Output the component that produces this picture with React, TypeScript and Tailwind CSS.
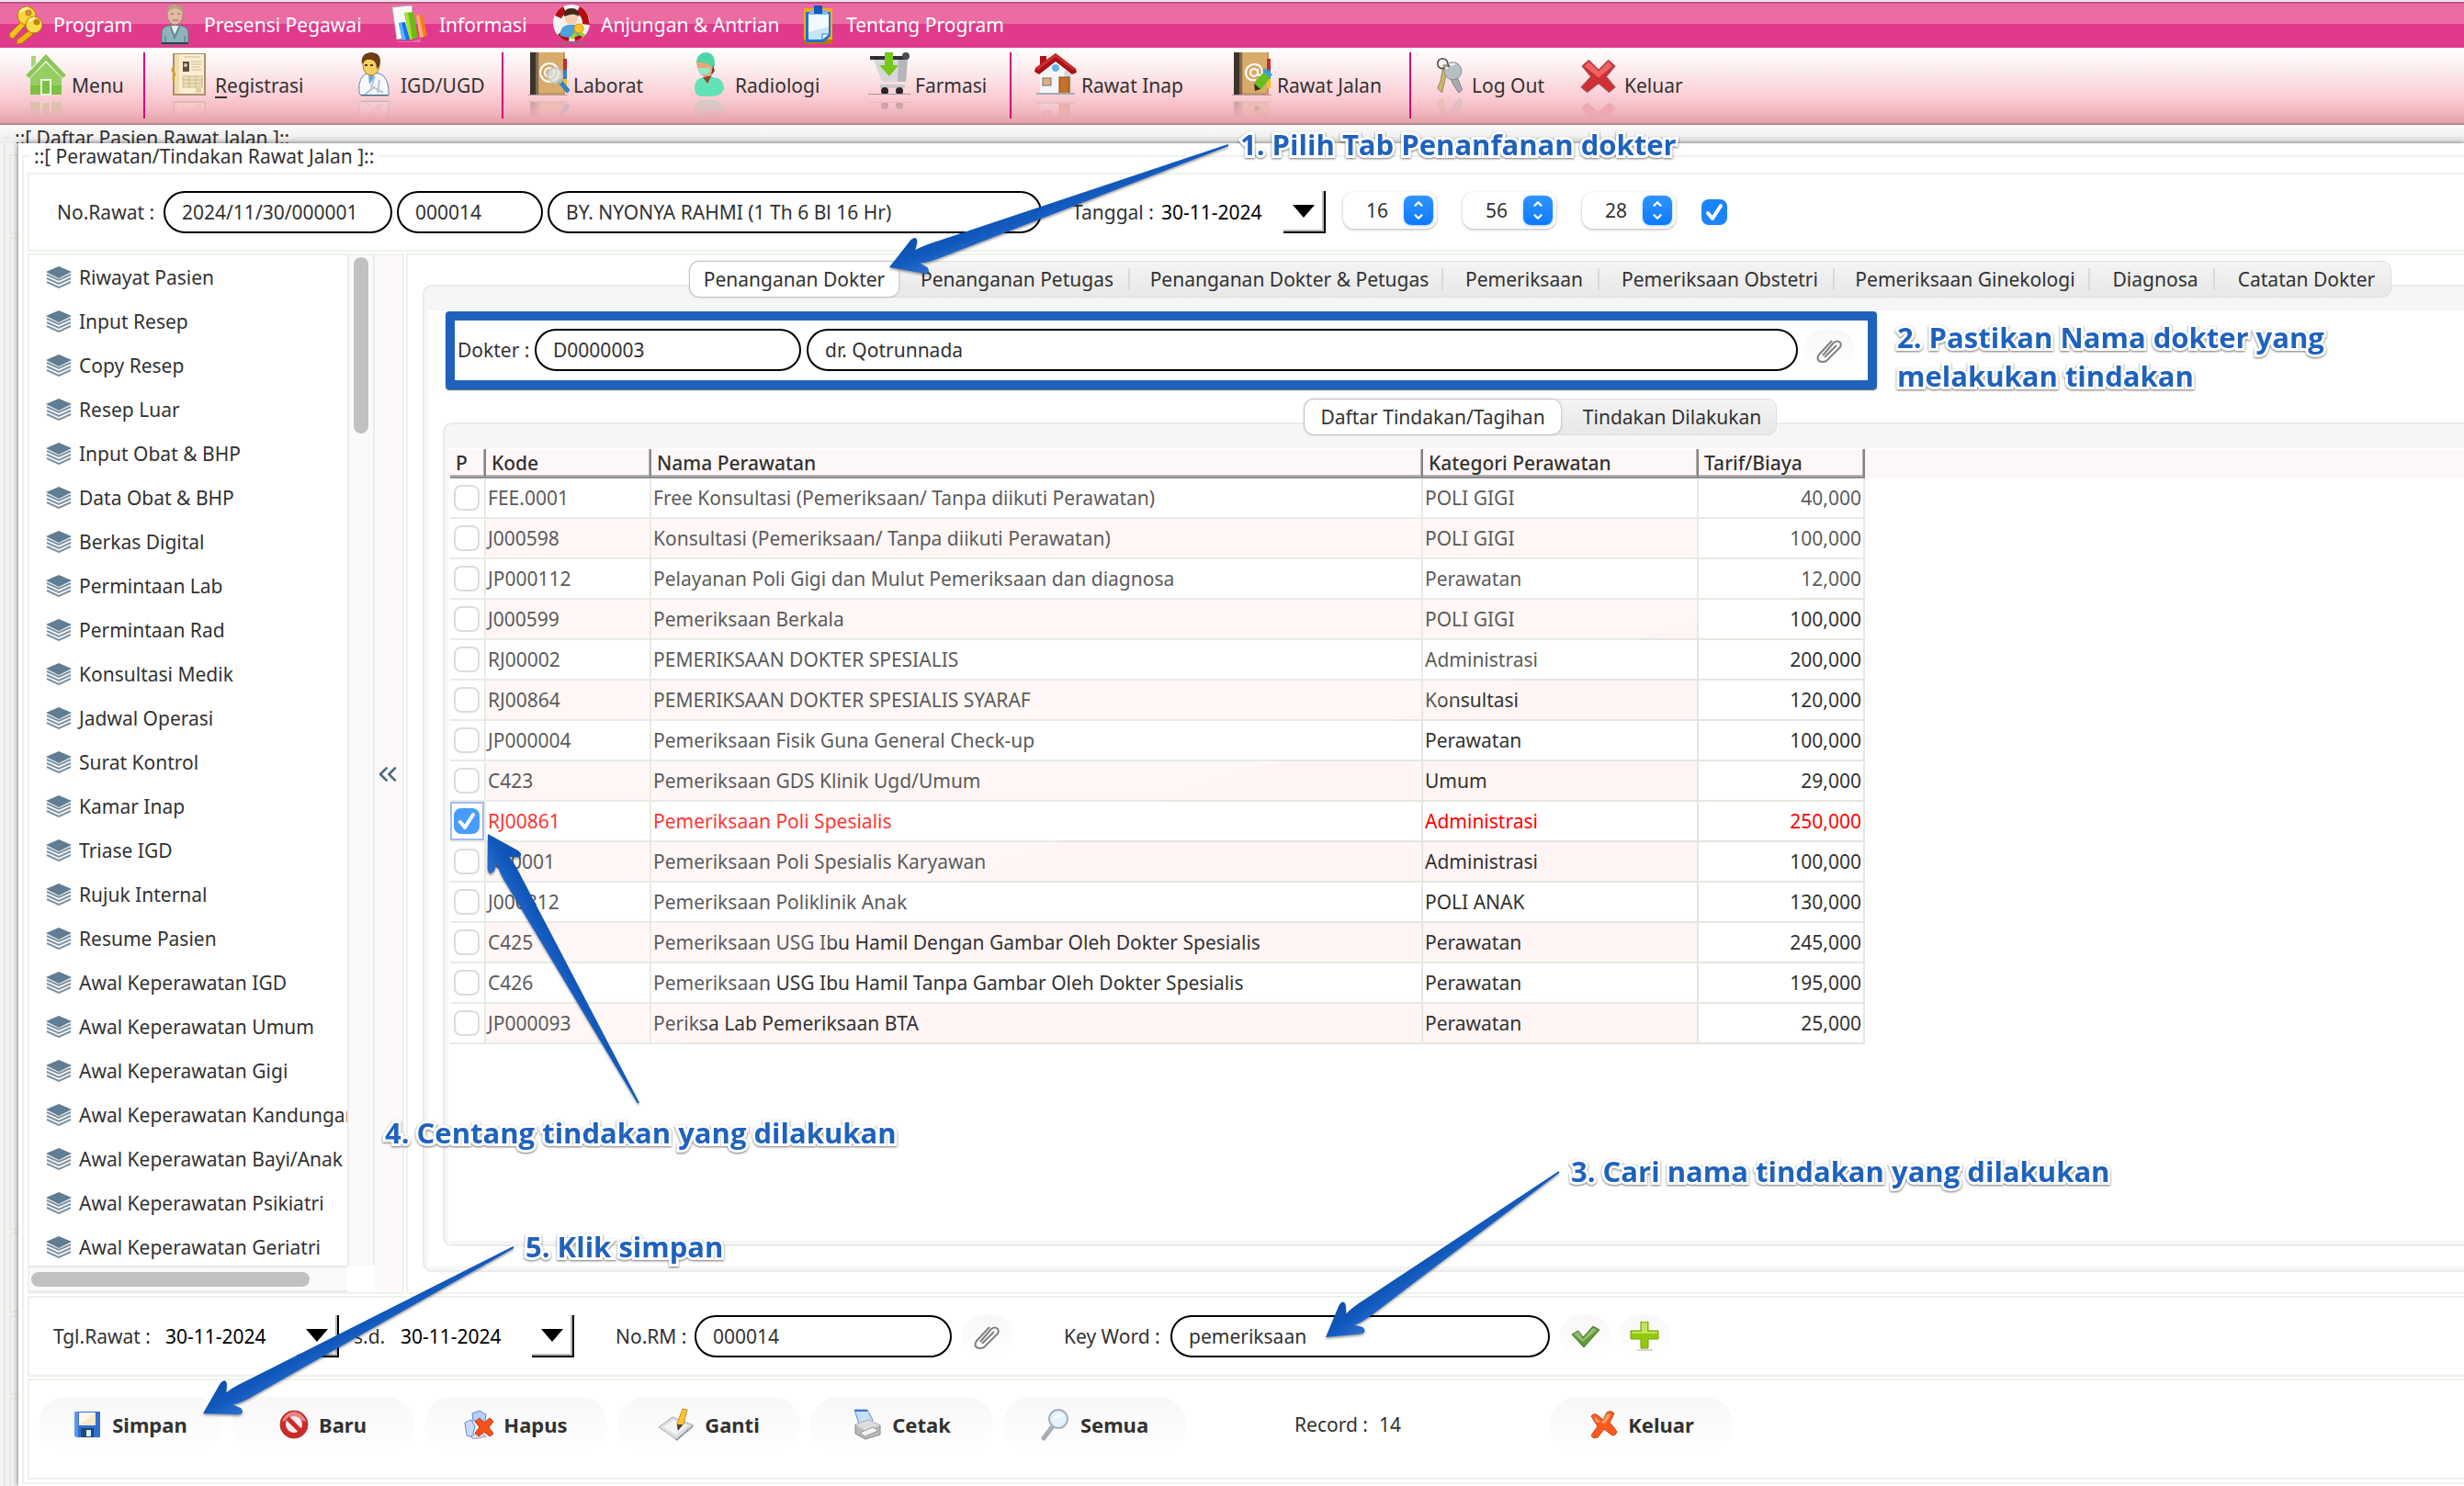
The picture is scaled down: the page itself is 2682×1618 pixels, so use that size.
import React, { useState, ReactNode } from 'react';
import { ChevronDown, ChevronUp, ChevronsLeft } from 'lucide-react';

interface Tindakan {
    kode: string;
    nama: string;
    kategori: string;
    tarif: string;
}

const daftarTindakan: Tindakan[] = [
    { kode: 'FEE.0001', nama: 'Free Konsultasi (Pemeriksaan/ Tanpa diikuti Perawatan)', kategori: 'POLI GIGI', tarif: '40,000' },
    { kode: 'J000598', nama: 'Konsultasi (Pemeriksaan/ Tanpa diikuti Perawatan)', kategori: 'POLI GIGI', tarif: '100,000' },
    { kode: 'JP000112', nama: 'Pelayanan Poli Gigi dan Mulut Pemeriksaan dan diagnosa', kategori: 'Perawatan', tarif: '12,000' },
    { kode: 'J000599', nama: 'Pemeriksaan Berkala', kategori: 'POLI GIGI', tarif: '100,000' },
    { kode: 'RJ00002', nama: 'PEMERIKSAAN DOKTER SPESIALIS', kategori: 'Administrasi', tarif: '200,000' },
    { kode: 'RJ00864', nama: 'PEMERIKSAAN DOKTER SPESIALIS SYARAF', kategori: 'Konsultasi', tarif: '120,000' },
    { kode: 'JP000004', nama: 'Pemeriksaan Fisik Guna General Check-up', kategori: 'Perawatan', tarif: '100,000' },
    { kode: 'C423', nama: 'Pemeriksaan GDS Klinik Ugd/Umum', kategori: 'Umum', tarif: '29,000' },
    { kode: 'RJ00861', nama: 'Pemeriksaan Poli Spesialis', kategori: 'Administrasi', tarif: '250,000' },
    { kode: 'K00001', nama: 'Pemeriksaan Poli Spesialis Karyawan', kategori: 'Administrasi', tarif: '100,000' },
    { kode: 'J000812', nama: 'Pemeriksaan Poliklinik Anak', kategori: 'POLI ANAK', tarif: '130,000' },
    { kode: 'C425', nama: 'Pemeriksaan USG Ibu Hamil Dengan Gambar Oleh Dokter Spesialis', kategori: 'Perawatan', tarif: '245,000' },
    { kode: 'C426', nama: 'Pemeriksaan USG Ibu Hamil Tanpa Gambar Oleh Dokter Spesialis', kategori: 'Perawatan', tarif: '195,000' },
    { kode: 'JP000093', nama: 'Periksa Lab Pemeriksaan BTA', kategori: 'Perawatan', tarif: '25,000' },
];

const menuSamping = [
    'Riwayat Pasien', 'Input Resep', 'Copy Resep', 'Resep Luar', 'Input Obat & BHP', 'Data Obat & BHP',
    'Berkas Digital', 'Permintaan Lab', 'Permintaan Rad', 'Konsultasi Medik', 'Jadwal Operasi', 'Surat Kontrol',
    'Kamar Inap', 'Triase IGD', 'Rujuk Internal', 'Resume Pasien', 'Awal Keperawatan IGD', 'Awal Keperawatan Umum',
    'Awal Keperawatan Gigi', 'Awal Keperawatan Kandungan', 'Awal Keperawatan Bayi/Anak', 'Awal Keperawatan Psikiatri',
    'Awal Keperawatan Geriatri',
];

const tabUtama = [
    { label: 'Penanganan Dokter', width: 'w-[227px]' },
    { label: 'Penanganan Petugas', width: 'w-[252px]' },
    { label: 'Penanganan Dokter & Petugas', width: 'w-[341px]' },
    { label: 'Pemeriksaan', width: 'w-[170px]' },
    { label: 'Pemeriksaan Obstetri', width: 'w-[256px]' },
    { label: 'Pemeriksaan Ginekologi', width: 'w-[278px]' },
    { label: 'Diagnosa', width: 'w-[136px]' },
    { label: 'Catatan Dokter', width: 'w-[191px]' },
];

const tabTindakan = [
    { label: 'Daftar Tindakan/Tagihan', width: 'w-[279px]' },
    { label: 'Tindakan Dilakukan', width: 'w-[234px]' },
];

/* ---------- menu bar icons (40 x 44) ---------- */

const KeysIcon = () => (
    <svg viewBox="0 0 40 44" className="w-10 h-11">
        <g stroke="#b97a00" strokeWidth="1">
            <path d="M18 18 L22 22 L8 37 L5 36 L4 32 Z" fill="#f5c21a" />
            <circle cx="23" cy="12" r="10" fill="#fbd53a" />
            <circle cx="25" cy="9" r="3" fill="#d98b56" />
            <path d="M26 28 L30 32 L18 42 L12 43 L13 38 Z" fill="#f0b512" />
            <circle cx="31" cy="22" r="9" fill="#fbdc4c" />
            <circle cx="34" cy="19" r="3" fill="#c98412" />
        </g>
        <path d="M16 8 Q20 4 25 4 M26 18 Q28 15 32 15" stroke="#fff3a8" strokeWidth="3" fill="none" />
    </svg>
);

const PersonIcon = () => (
    <svg viewBox="0 0 40 44" className="w-10 h-11">
        <path d="M6 43 V31 Q6 24 14 23 H27 Q35 24 35 31 V43 Z" fill="#8fb3b8" stroke="#5a7c82" />
        <path d="M14 23 L20 32 L27 23 Z" fill="#e9f1f2" />
        <path d="M15 22 L20 36 L26 22" fill="none" stroke="#5f8b92" strokeWidth="2" />
        <path d="M10 43 V34 M31 43 V34" stroke="#4d747b" />
        <ellipse cx="20.500" cy="11" rx="8.500" ry="11" fill="#e3b9a2" stroke="#9b8a6c" />
        <path d="M12 11 Q11 0 20 0 Q30 0 29 11 Q27 4 20 4 Q14 4 12 11" fill="#b5a57c" />
        <path d="M16 10 H19 M23 10 H26 M18 17 H24" stroke="#8a5e4e" strokeWidth="1" />
        <rect x="6" y="41" width="29" height="2" fill="#1d4a56" />
    </svg>
);

const ChartIcon = () => (
    <svg viewBox="0 0 40 44" className="w-10 h-11">
        <path d="M1 3 L22 1 L26 34 L6 38 Z" fill="#fafafa" stroke="#bdbdbd" />
        <path d="M27 12 L34 11 L39 34 L31 36 Z" fill="#f57b1f" />
        <path d="M27 12 L30 11 L35 35 L31 36 Z" fill="#ffb46b" />
        <path d="M14 9 L24 8 L29 36 L20 38 Z" fill="#6cba14" />
        <path d="M14 9 L18 8 L23 38 L20 38 Z" fill="#a6df3a" />
        <path d="M8 20 L15 19 L20 38 L12 39 Z" fill="#1472e6" />
        <path d="M8 20 L11 20 L16 38 L12 39 Z" fill="#5ab4ff" />
        <path d="M6 40 L22 40 L32 37 V41 H8 Z" fill="#ffffff" opacity=".25" />
    </svg>
);

const LifeRingIcon = () => (
    <svg viewBox="0 0 40 44" className="w-10 h-11">
        <ellipse cx="20" cy="42" rx="19" ry="1" fill="#8d6b80" />
        <circle cx="20" cy="20" r="20" fill="#f4f4f4" />
        <g fill="#b40e12">
            <path d="M20 20 L11 2 Q5 5 2 12 Z" />
            <path d="M20 20 L29 2 Q35 5 38 12 L40 22 Z" />
            <path d="M20 20 L5 33 Q10 39 17 40 Z" />
            <path d="M20 20 L34 34 Q30 38 24 40 Z" />
        </g>
        <circle cx="20" cy="20" r="12" fill="#f5f0ee" />
        <path d="M8 34 Q7 24 16 22 H24 Q31 24 31 33 Q20 38 8 34" fill="#4aa3d9" />
        <circle cx="20" cy="15" r="7" fill="#f5cdb0" />
        <path d="M12 13 Q11 4 20 4 Q29 4 28 13 Q23 8 12 13" fill="#43291f" />
        <circle cx="28" cy="26" r="5" fill="#f9c623" stroke="#d79400" />
        <path d="M25 31 L20 37 M29 31 L34 34" stroke="#a5cf2a" strokeWidth="4" />
    </svg>
);

const ClipboardIcon = () => (
    <svg viewBox="0 0 40 44" className="w-10 h-11">
        <rect x="6" y="4" width="31" height="39" fill="#f1ae08" />
        <rect x="6" y="38" width="31" height="5" fill="#b87a05" />
        <path d="M8 8 H35 V34 L28 41 H8 Z" fill="#1d74d4" />
        <path d="M11 10 H33 V32 L26 38 H11 Z" fill="#f3faff" />
        <path d="M11 30 L33 24 V32 L26 38 H11 Z" fill="#c4e6ff" />
        <path d="M26 38 V32 H33" fill="#fff" stroke="#1d74d4" />
        <rect x="12" y="6" width="20" height="5" fill="#7db8f5" />
        <rect x="17" y="1" width="9" height="9" fill="#0f57c2" />
    </svg>
);

/* ---------- toolbar icons, drawn with their reflection ---------- */

function ToolIcon({ children, width = 'w-12' }: { children: ReactNode; width?: string }) {
    return (
        <svg
            viewBox="0 0 48 72"
            className={`${width} h-[72px] shrink-0 [mask-image:linear-gradient(to_bottom,black_68%,transparent_100%)]`}
        >
            <g>{children}</g>
            <g opacity=".3" transform="translate(0 100) scale(1 -1)">{children}</g>
        </svg>
    );
}

const homeIcon = (
    <g>
        <path d="M8 4 H13 V12 L8 17 Z" fill="#a9d579" />
        <path d="M24 2 L46 25 L42 28 L24 9 L6 28 L2 25 Z" fill="#8ac85a" />
        <path d="M7 28 L24 11 L41 28 V46 H7 Z" fill="#95cf64" />
        <path d="M7 36 H41 V46 H7 Z" fill="#7cc142" />
        <path d="M19 46 V30 H29 V46 Z" fill="#7cc142" stroke="#eef7e2" strokeWidth="2" />
    </g>
);

const recordIcon = (
    <g>
        <rect x="6" y="1" width="36" height="46" fill="#a98f6c" />
        <rect x="8" y="2" width="32" height="43" fill="#fbeed0" />
        <rect x="8" y="2" width="5" height="43" fill="#f1dcae" />
        <path d="M18 5 H36 M26 10 H38 M26 13 H38 M26 16 H36 M26 19 H38" stroke="#cdbb93" strokeWidth="1" />
        <rect x="17" y="10" width="7" height="11" fill="#5b5142" />
        <circle cx="20" cy="14" r="2" fill="#d7c6a0" />
        <path d="M17 26 H38 V38 H17 Z M17 30 H38 M17 34 H38 M24 26 V38 M31 26 V38" fill="#efe0ba" stroke="#c9b88f" />
        <path d="M8 16 Q4 17 6 21 Q10 23 7 27 Q5 30 8 31" fill="none" stroke="#d9a62c" strokeWidth="2" />
        <rect x="31" y="39" width="6" height="5" fill="#e2d0a2" />
    </g>
);

const doctorIcon = (
    <g>
        <path d="M7 44 Q5 26 17 22 L29 23 Q40 27 39 47 H9 Z" fill="#f7f9fc" stroke="#5a86ad" />
        <path d="M17 23 L18 35 L24 26 Z" fill="#6aa4da" />
        <path d="M24 26 L20 38 M29 30 L27 44 M13 46 L23 38 L33 44" fill="none" stroke="#b4c2d1" strokeWidth="2" />
        <ellipse cx="20" cy="14" rx="9" ry="11" fill="#f6cf62" stroke="#a97b24" />
        <path d="M10 13 Q8 1 20 0 Q33 1 29 15 L26 18 Q26 9 20 8 Q13 7 10 13" fill="#6b3c16" />
        <path d="M13 14 H16 M19 14 H22" stroke="#5a3412" strokeWidth="2" />
        <rect x="9" y="46" width="29" height="1" fill="#2c6580" />
    </g>
);

const bookBase = (
    <g>
        <rect x="5" y="0" width="38" height="46" fill="#c6975a" />
        <rect x="15" y="0" width="26" height="44" fill="#d8ab6c" />
        <rect x="5" y="0" width="9" height="46" fill="#3c342b" />
        <rect x="11" y="0" width="3" height="46" fill="#7d6a53" />
        <rect x="41" y="7" width="4" height="12" fill="#c32b2b" />
        <rect x="41" y="19" width="4" height="10" fill="#2e7fd0" />
        <rect x="41" y="29" width="4" height="10" fill="#f4bf1c" />
        <rect x="3" y="46" width="43" height="1" fill="#b59aa0" />
    </g>
);

const labIcon = (
    <g>
        {bookBase}
        <circle cx="26" cy="22" r="10" fill="none" stroke="#fff" strokeWidth="2" />
        <circle cx="26" cy="22" r="5" fill="none" stroke="#fff" strokeWidth="2" />
        <circle cx="32" cy="25" r="8" fill="#dfe5e4" fillOpacity=".75" stroke="#c5c9cb" strokeWidth="2" />
        <path d="M37 31 L47 43" stroke="#2b84c4" strokeWidth="5" />
        <path d="M36 30 L39 33" stroke="#bbb" strokeWidth="4" />
    </g>
);

const surgeonIcon = (
    <g>
        <path d="M8 38 Q8 28 19 27 H28 Q40 28 40 40 Q38 47 27 48 H14 Q8 46 8 38" fill="#63e2b8" />
        <path d="M17 27 L22 34 L27 25 Z" fill="#8a4b2c" />
        <path d="M10 10 H29 V22 Q24 27 18 26 Q11 24 10 10" fill="#e9a579" />
        <path d="M12 17 H24 Q27 21 22 24 H15 Q12 22 12 17" fill="#8cecca" />
        <path d="M10 11 Q11 0 21 0 Q31 1 30 15 L27 16 Q22 10 10 11" fill="#4fd6a8" />
        <path d="M28 14 L26 25 L30 20 Z" fill="#7a3d22" />
    </g>
);

const cartIcon = (
    <g>
        <path d="M6 6 H44 L42 32 H16 Z" fill="#d7d7d9" />
        <path d="M34 6 H44 L42 32 H33 Z" fill="#b6b6ba" />
        <rect x="3" y="4" width="38" height="4" fill="#2f2f33" />
        <circle cx="42" cy="4" r="4" fill="#4a4a50" />
        <rect x="14" y="35" width="27" height="4" fill="#c9c9cc" />
        <circle cx="19" cy="42" r="4" fill="#2b2528" />
        <circle cx="35" cy="42" r="4" fill="#2b2528" />
        <rect x="1" y="45" width="46" height="1" fill="#a8979b" />
        <path d="M19 0 H28 V14 H34 L24 26 L13 14 H19 Z" fill="#76c81b" />
    </g>
);

const houseIcon = (
    <g>
        <rect x="7" y="4" width="7" height="12" fill="#b01318" />
        <path d="M7 20 L24 6 L41 20 V45 H7 Z" fill="#f5f5f7" />
        <path d="M34 20 H41 V45 H30 Z" fill="#d5d6da" />
        <path d="M24 1 L46 18 L47 22 L42 24 L24 10 L6 24 L1 21 L2 17 Z" fill="#a51218" />
        <path d="M24 1 L46 18 L43 19 L24 5 L5 19 L2 17 Z" fill="#cf2d30" />
        <circle cx="24" cy="17" r="4" fill="#6ab1e0" />
        <rect x="10" y="28" width="9" height="8" fill="#d8b184" stroke="#7a6a58" />
        <rect x="28" y="27" width="11" height="18" fill="#c4712c" stroke="#8c4714" />
        <path d="M3 45 H45" stroke="#a3adb5" strokeWidth="2" />
    </g>
);

const addressIcon = (
    <g>
        {bookBase}
        <circle cx="27" cy="22" r="4" fill="none" stroke="#fff" strokeWidth="2" />
        <path d="M31 18 V24 Q36 27 36 20 Q34 12 26 13 Q18 15 18 23 Q20 32 29 30" fill="none" stroke="#fff" strokeWidth="2" />
        <path d="M28 32 L38 21 L45 27 L35 40 L28 39 Z" fill="#68bf1c" />
        <path d="M38 17 L47 24 L44 28 L36 20 Z" fill="#38a1d8" />
        <path d="M27 34 L34 40 L28 42 Z" fill="#2d2b28" />
    </g>
);

const logoutIcon = (
    <g>
        <path d="M14 8 L20 8 L16 30 L12 46 L6 40 L10 30 Z" fill="#cdb56d" stroke="#85734a" />
        <circle cx="13" cy="6" r="7" fill="none" stroke="#4b4b4f" strokeWidth="2" />
        <path d="M22 22 H32 L40 42 L35 46 L27 34 Z" fill="#a6abb0" stroke="#6d7278" />
        <circle cx="27" cy="16" r="12" fill="#b9bec3" stroke="#767b81" />
        <path d="M18 13 Q22 6 30 7" fill="none" stroke="#f0f2f4" strokeWidth="3" />
        <circle cx="21" cy="9" r="2" fill="#5b5f64" />
    </g>
);

const crossIcon = (
    <g>
        <path
            d="M12 7 L23 18 L34 7 L42 14 L32 26 L42 38 L35 44 L23 34 L10 44 L3 38 L14 26 L4 14 Z"
            fill="#cf3036"
            stroke="#8c6264"
        />
        <path d="M12 9 L23 20 L34 9 L39 14 L23 27 L7 14 Z" fill="#ee6264" />
    </g>
);

/* ---------- small icons ---------- */

const LayersIcon = () => (
    <svg viewBox="0 0 28 24" className="w-7 h-6 shrink-0">
        <path d="M14 0 L28 6 L14 13 L0 6 Z" fill="#5f7d93" />
        <g fill="none" stroke="#7d93a4" strokeWidth="2">
            <path d="M1 9 L14 15 L27 9" />
            <path d="M1 13 L14 19 L27 13" />
            <path d="M1 17 L14 23 L27 17" />
        </g>
    </svg>
);

const SaveIcon = () => (
    <svg viewBox="0 0 32 32" className="w-8 h-8">
        <path d="M2 2 H30 V30 H4 L2 28 Z" fill="#2f6fd3" />
        <path d="M2 2 H6 V30 H4 L2 28 Z" fill="#5e97ea" />
        <rect x="7" y="3" width="18" height="14" fill="#fdf7ee" />
        <path d="M7 17 L25 3 V17 Z" fill="#fbe6c8" />
        <rect x="9" y="20" width="14" height="10" fill="#1c4c6e" />
        <rect x="15" y="22" width="5" height="7" fill="#d8eef5" />
    </svg>
);

const BanIcon = () => (
    <svg viewBox="0 0 32 32" className="w-8 h-8">
        <circle cx="16" cy="16" r="15" fill="#cf2a2a" stroke="#a33" />
        <path d="M3 13 Q6 3 16 2 Q26 3 29 13 Q16 8 3 13" fill="#e88584" />
        <circle cx="16" cy="16" r="9" fill="#f8eded" />
        <path d="M9 9 L23 23" stroke="#cf2a2a" strokeWidth="5" />
    </svg>
);

const RecycleIcon = () => (
    <svg viewBox="0 0 32 32" className="w-8 h-8">
        <path d="M9 4 L17 1 L24 5 L23 12 L10 12 Z" fill="#b4d0fa" stroke="#5f86da" />
        <path d="M1 14 L8 11 L12 18 L9 30 L3 28 Z" fill="#c9dcfb" stroke="#5f86da" />
        <path d="M8 28 L18 24 L24 29 L10 32 Z" fill="#dfe2ea" stroke="#8e98b4" />
        <path d="M12 13 L17 9 L22 14 L28 9 L32 13 L27 19 L32 26 L28 29 L22 24 L16 29 L12 25 L17 19 Z" fill="#f4511c" stroke="#c53a10" />
    </svg>
);

const EditIcon = () => (
    <svg viewBox="0 0 40 36" className="w-10 h-9">
        <path d="M1 21 L16 10 L39 19 L21 35 Z" fill="#dcdee0" stroke="#a4a9ae" />
        <path d="M6 21 L17 13 L33 19 L20 29 Z" fill="#f4f5f6" />
        <path d="M20 35 L38 20" stroke="#7d8790" strokeWidth="2" strokeDasharray="2 1" />
        <path d="M22 24 L21 17 L27 1 L32 2 L28 18 Z" fill="#f8c63a" stroke="#cc8a1d" />
        <path d="M21 18 L27 18 L22 25 Z" fill="#444" />
    </svg>
);

const PrintIcon = () => (
    <svg viewBox="0 0 32 34" className="w-8 h-9">
        <path d="M2 1 H16 L22 12 L18 18 L7 16 Z" fill="#c5dff9" stroke="#5e91d6" />
        <path d="M2 1 H16 V3 H3 Z" fill="#3e79cc" />
        <path d="M3 17 L18 12 L30 18 V28 L14 33 L3 27 Z" fill="#b9b9bb" stroke="#88888c" />
        <path d="M3 17 L18 12 L30 18 L14 24 Z" fill="#dcdcde" />
        <path d="M8 26 L22 20 L28 24 L13 30 Z" fill="#f4f4f5" stroke="#9b9b9f" />
    </svg>
);

const SearchIcon = () => (
    <svg viewBox="0 0 32 34" className="w-8 h-9">
        <path d="M12 20 L3 32" stroke="#a8adb3" strokeWidth="5" strokeLinecap="round" />
        <circle cx="19" cy="11" r="10" fill="#e2f2fe" stroke="#a9b0b8" strokeWidth="2" />
        <path d="M12 12 Q19 2 26 8 Q21 8 12 12" fill="#ffffff" />
    </svg>
);

const CloseIcon = () => (
    <svg viewBox="0 0 32 32" className="w-8 h-8">
        <path
            d="M3 7 Q6 3 10 6 L16 11 L20 3 Q24 0 28 4 L23 14 Q28 19 31 24 Q30 28 26 28 L17 21 L10 30 Q5 32 3 28 L10 18 Z"
            fill="#fb5a1e"
            stroke="#c9400f"
        />
        <path d="M6 7 L14 14 L21 4 L25 5 L18 15 L8 13 Z" fill="#ff9d71" />
    </svg>
);

const ClipIcon = () => (
    <svg viewBox="0 0 28 28" className="w-7 h-7">
        <path
            d="M7 20 L19 6 Q23 3 26 6 Q28 9 25 12 L11 26 Q7 28 3 26 Q0 23 3 19 L17 4 M9 22 L22 9"
            fill="none"
            stroke="#808080"
            strokeWidth="2"
        />
    </svg>
);

const CheckIcon = () => (
    <svg viewBox="0 0 32 26" className="w-8 h-7">
        <path d="M1 11 L8 7 L13 14 L24 2 L31 6 L14 25 Z" fill="#5f9a3a" stroke="#49792b" />
        <path d="M3 11 L8 8 L13 16 L24 4 L28 6 L13 19 Z" fill="#94bd76" />
    </svg>
);

const PlusIcon = () => (
    <svg viewBox="0 0 32 32" className="w-8 h-8">
        <rect x="8" y="30" width="17" height="2" fill="#d5d5d5" />
        <path d="M12 0 H20 V10 H31 V19 H20 V29 H12 V19 H1 V10 H12 Z" fill="#93c90e" stroke="#72a300" />
        <path d="M13 1 H19 V11 H30 V13 H2 V11 H13 Z" fill="#c1e55c" />
    </svg>
);

const menuUtama = [
    { label: 'Program', icon: <KeysIcon />, width: 'w-[164px]' },
    { label: 'Presensi Pegawai', icon: <PersonIcon />, width: 'w-[256px]' },
    { label: 'Informasi', icon: <ChartIcon />, width: 'w-[176px]' },
    { label: 'Anjungan & Antrian', icon: <LifeRingIcon />, width: 'w-[267px]' },
    { label: 'Tentang Program', icon: <ClipboardIcon />, width: 'w-[240px]' },
];

const toolbar = [
    { label: 'Menu', icon: homeIcon, width: 'w-[154px]', sep: true },
    { label: 'Registrasi', icon: recordIcon, width: 'w-[202px]', mnemonic: true },
    { label: 'IGD/UGD', icon: doctorIcon, width: 'w-[186px]', sep: true },
    { label: 'Laborat', icon: labIcon, width: 'w-[176px]' },
    { label: 'Radiologi', icon: surgeonIcon, width: 'w-[196px]' },
    { label: 'Farmasi', icon: cartIcon, width: 'w-[179px]', sep: true },
    { label: 'Rawat Inap', icon: houseIcon, width: 'w-[213px]' },
    { label: 'Rawat Jalan', icon: addressIcon, width: 'w-[220px]', sep: true },
    { label: 'Log Out', icon: logoutIcon, width: 'w-[158px]', iconWidth: 'w-[38px]' },
    { label: 'Keluar', icon: crossIcon, width: 'w-[160px]', iconWidth: 'w-[46px]' },
];

function TextField({ id, value, width, label }: { id: string; value: string; width: string; label?: string }) {
    return (
        <input
            id={id}
            aria-label={label}
            defaultValue={value}
            className={`${width} h-[46px] shrink-0 rounded-full border-2 border-black bg-white px-[18px] text-[21px] text-[#323232] outline-none`}
        />
    );
}

function DateField({ id, width }: { id: string; width: string }) {
    return (
        <div className={`${width} relative h-[46px] shrink-0`}>
            <select id={id} className="h-full w-full appearance-none bg-transparent text-[21px] text-black outline-none">
                <option>30-11-2024</option>
            </select>
            <span className="pointer-events-none absolute right-0 top-0 flex h-[46px] w-[46px] items-center justify-center border-b-2 border-r-2 border-black bg-white shadow-[inset_-2px_-2px_0_#b9b9b9]">
                <svg viewBox="0 0 24 14" className="h-[14px] w-6"><path d="M0 0 H24 L12 14 Z" fill="#000" /></svg>
            </span>
        </div>
    );
}

function Spinner({ value, label }: { value: string; label: string }) {
    return (
        <div className="mb-1 flex h-10 w-[102px] shrink-0 items-center rounded-xl bg-white pl-[25px] pr-[3px] shadow-[0_1px_3px_rgba(0,0,0,0.3)]">
            <input aria-label={label} defaultValue={value} className="w-[41px] bg-transparent text-[21px] text-[#323232] outline-none" />
            <button aria-label={`Ubah ${label}`} className="flex h-8 w-8 flex-col items-center justify-center rounded-lg bg-gradient-to-b from-[#2f94ff] to-[#0a7aff] text-white shadow-[0_1px_3px_rgba(10,122,255,0.4)]">
                <ChevronUp className="h-[14px] w-5" strokeWidth={4} />
                <ChevronDown className="h-[14px] w-5" strokeWidth={4} />
            </button>
        </div>
    );
}

function Tick({ checked, label, onChange }: { checked: boolean; label: string; onChange: () => void }) {
    return (
        <span className="relative block h-7 w-7 shrink-0">
            <input
                type="checkbox"
                aria-label={label}
                checked={checked}
                onChange={onChange}
                className="block h-7 w-7 appearance-none rounded-lg border-2 border-[#d4d4d4] bg-white checked:border-0 checked:bg-[#1a84fd]"
            />
            {checked && (
                <svg viewBox="0 0 28 28" className="pointer-events-none absolute inset-0 h-7 w-7">
                    <path d="M7 15 L12 21 L21 7" fill="none" stroke="#fff" strokeWidth="4" strokeLinecap="round" strokeLinejoin="round" />
                </svg>
            )}
        </span>
    );
}

function IconButton({ label, children }: { label: string; children: ReactNode }) {
    return (
        <button aria-label={label} className="flex h-[46px] w-14 shrink-0 items-center justify-center rounded-full bg-gradient-to-b from-[#f9f7f8] to-white">
            {children}
        </button>
    );
}

function ActionButton({ label, children }: { label: string; children: ReactNode }) {
    return (
        <button className="flex h-[60px] w-[199px] shrink-0 items-center justify-center gap-[11px] rounded-full bg-gradient-to-b from-[#f9f7f8] to-white text-[22px] font-bold">
            {children}
            {label}
        </button>
    );
}

function Tabs({ items }: { items: { label: string; width: string }[] }) {
    return (
        <div role="tablist" className="relative mx-auto flex h-10 w-fit rounded-[10px] border border-[#dddddd] bg-gradient-to-b from-[#f4f4f4] to-[#e8e8e8]">
            {items.map((tab, index) => (
                <button
                    key={tab.label}
                    role="tab"
                    aria-selected={index === 0}
                    className={`${tab.width} flex items-center justify-center whitespace-nowrap ${
                        index === 0 ? 'rounded-[10px] bg-white shadow-[0_0_3px_rgba(0,0,0,0.35)]' : 'pl-2'
                    }`}
                >
                    <span className="flex-1">{tab.label}</span>
                    {index > 0 && index < items.length - 1 && <span className="h-6 w-[2px] bg-[#d9d9d9]" />}
                </button>
            ))}
        </div>
    );
}

// Tapered pointer: the tip is at (x2, y2), the thin end at (x1, y1)
function Arrow({ x1, y1, x2, y2 }: { x1: number; y1: number; x2: number; y2: number }) {
    const len = Math.hypot(x1 - x2, y1 - y2);
    const angle = (Math.atan2(y1 - y2, x1 - x2) * 180) / Math.PI;
    return (
        <g transform={`translate(${x2} ${y2}) rotate(${angle})`}>
            <path
                d={`M0 0 L32 -20 Q40 -23 38 -16 L33 -8 Q42 -10 60 -9 L${len} -1 L${len} 1 L60 9 Q42 10 33 7 L39 14 Q41 22 33 19 Z`}
                fill="url(#arrowFill)"
            />
        </g>
    );
}

function Note({ place, children }: { place: string; children: ReactNode }) {
    return (
        <p
            className={`${place} absolute whitespace-nowrap font-['Open_Sans',sans-serif] text-[31px] font-bold leading-[42px] text-[#1f62bd] [-webkit-text-stroke:6px_white] [paint-order:stroke_fill] [filter:drop-shadow(0_1px_1px_rgba(0,0,0,0.55))]`}
        >
            {children}
        </p>
    );
}

export default function App() {
    const [dipilih, setDipilih] = useState<string[]>(['RJ00861']);
    const [jamOtomatis, setJamOtomatis] = useState(true);

    const toggle = (kode: string) =>
        setDipilih(dipilih.includes(kode) ? dipilih.filter(k => k !== kode) : [...dipilih, kode]);

    return (
        <div className="relative flex h-screen flex-col overflow-hidden bg-[#f3f3f3] font-['Noto_Sans',sans-serif] text-[21px] leading-[30px] text-[#323232]">
            {/* Menu bar */}
            <nav className="flex h-[52px] shrink-0 items-center border-t-2 border-[#e6e6ea] bg-[linear-gradient(to_bottom,#c54f88_0,#c54f88_2px,#ea6ca2_2px,#ea6ca2_24px,#e03a8c_24px)] pl-[6px] text-white">
                {menuUtama.map(menu => (
                    <button key={menu.label} className={`${menu.width} flex shrink-0 items-center gap-3 whitespace-nowrap`}>
                        {menu.icon}
                        {menu.label}
                    </button>
                ))}
            </nav>

            {/* Toolbar */}
            <header className="flex h-[84px] shrink-0 items-center border-b-2 border-[#b9858b] bg-[linear-gradient(to_bottom,#ffffff_0%,#fdecee_30%,#fbd0d6_62%,#f4bbc2_82%,#e4a1a9_100%)] pl-[2px]">
                {toolbar.map(item => (
                    <React.Fragment key={item.label}>
                        <button className={`${item.width} flex shrink-0 items-center gap-1 whitespace-nowrap pl-6`}>
                            <ToolIcon width={item.iconWidth}>{item.icon}</ToolIcon>
                            {item.mnemonic ? <span><u className="underline-offset-4">{item.label[0]}</u>{item.label.slice(1)}</span> : item.label}
                        </button>
                        {item.sep && <span className="h-[72px] w-[2px] shrink-0 bg-[#d6007f]" />}
                    </React.Fragment>
                ))}
            </header>

            {/* Window behind */}
            <div className="h-5 shrink-0 overflow-hidden bg-gradient-to-b from-[#fbfbfb] to-[#ececec]">
                <div className="flex h-7 items-center gap-1 pl-1 leading-7">
                    <span className="h-[2px] w-2 bg-[#e6eae1]" />
                    <span className="whitespace-nowrap">::[ Daftar Pasien Rawat Jalan ]::</span>
                    <span className="h-[2px] flex-1 bg-[#e6eae1]" />
                </div>
            </div>

            <div className="flex min-h-0 flex-1">
                <div className="ml-1 flex w-4 shrink-0 flex-col gap-[3px] border-l-2 border-[#e6eae1] pl-1 pt-3">
                    <div className="h-[87px] border-y-2 border-l-2 border-[#e6eae1]" />
                    <div className="flex-1 border-y-2 border-l-2 border-[#e6eae1]" />
                    <div className="h-[87px] border-y-2 border-l-2 border-[#e6eae1]" />
                    <div className="h-[87px] border-y-2 border-l-2 border-[#e6eae1]" />
                    <div className="h-[96px] border-l-2 border-t-2 border-[#e6eae1]" />
                </div>

                <main className="relative flex min-w-0 flex-1 flex-col bg-white pb-[2px] pl-1 shadow-[0_0_6px_rgba(0,0,0,0.6)]">
                    <fieldset className="flex min-h-0 min-w-0 flex-1 flex-col gap-[2px] border-y-2 border-l-2 border-[#edf3ea] pb-[3px] pl-1 pt-1">
                        <legend className="ml-[2px] px-[5px] leading-7">::[ Perawatan/Tindakan Rawat Jalan ]::</legend>

                        {/* Patient */}
                        <section className="flex h-[86px] shrink-0 items-center border-y-2 border-l-2 border-[#edf3ea] pl-[30px]">
                            <label htmlFor="norawat" className="w-[116px] shrink-0">No.Rawat :</label>
                            <div className="flex gap-[5px]">
                                <TextField id="norawat" value="2024/11/30/000001" width="w-[249px]" />
                                <TextField id="norm" label="No. RM" value="000014" width="w-[159px]" />
                                <TextField id="pasien" label="Nama Pasien" value="BY. NYONYA RAHMI (1 Th 6 Bl 16 Hr)" width="w-[538px]" />
                            </div>
                            <label htmlFor="tanggal" className="ml-[33px] w-[97px] shrink-0">Tanggal :</label>
                            <DateField id="tanggal" width="w-[179px]" />
                            <div className="ml-[19px] flex items-center gap-7">
                                <Spinner label="jam" value="16" />
                                <Spinner label="menit" value="56" />
                                <Spinner label="detik" value="28" />
                                <Tick label="Jam otomatis" checked={jamOtomatis} onChange={() => setJamOtomatis(!jamOtomatis)} />
                            </div>
                        </section>

                        <div className="flex min-h-0 flex-1 gap-[2px]">
                            {/* Side menu */}
                            <aside className="flex w-[410px] shrink-0 border-2 border-[#edf3ea]">
                                <div className="flex w-[346px] shrink-0 flex-col">
                                    <ul className="min-h-0 flex-1 overflow-hidden">
                                        {menuSamping.map(label => (
                                            <li key={label}>
                                                <button className="flex h-12 w-full items-center gap-2 whitespace-nowrap pl-[18px]">
                                                    <LayersIcon />
                                                    {label}
                                                </button>
                                            </li>
                                        ))}
                                    </ul>
                                    <div className="flex h-[29px] shrink-0 items-center border-y-2 border-[#e9e9e9] bg-[#fafafa] pl-[2px]">
                                        <span className="h-4 w-[303px] rounded-full bg-[#c1c1c1]" />
                                    </div>
                                </div>
                                <div className="mb-[29px] flex w-[30px] shrink-0 justify-center border-x-2 border-[#ececec] bg-[#fafafa] pt-[2px]">
                                    <span className="h-[192px] w-4 rounded-full bg-[#c1c1c1]" />
                                </div>
                                <button aria-label="Sembunyikan menu" className="flex flex-1 items-center bg-[#fdf9f9] text-[#4d6b80]">
                                    <ChevronsLeft className="-ml-[2px] h-8 w-8 shrink-0" />
                                </button>
                            </aside>

                            {/* Treatment */}
                            <section className="relative min-w-0 flex-1 overflow-hidden border-y-2 border-l-2 border-[#edf3ea] pb-[22px] pl-4 pt-[6px]">
                                <div className="-mr-[211px] flex h-full flex-col">
                                    <div className="z-10 -mb-[14px]"><Tabs items={tabUtama} /></div>
                                    <div className="flex min-h-0 flex-1 flex-col rounded-[10px] border-2 border-[#ebebeb] bg-[#f6f6f6] pb-1 pl-1 pt-[26px]">
                                        <div className="flex min-h-0 flex-1 flex-col bg-white pb-[22px]">
                                            <div className="flex h-[86px] shrink-0 items-center pl-8">
                                                <label htmlFor="kddokter" className="w-[84px] shrink-0">Dokter :</label>
                                                <div className="flex gap-[6px]">
                                                    <TextField id="kddokter" value="D0000003" width="w-[290px]" />
                                                    <TextField id="dokter" label="Nama Dokter" value="dr. Qotrunnada" width="w-[1079px]" />
                                                    <IconButton label="Pilih dokter"><ClipIcon /></IconButton>
                                                </div>
                                            </div>
                                            <div className="z-10 -mb-[14px] mr-5 pl-4 pt-[10px]"><Tabs items={tabTindakan} /></div>
                                            <div className="ml-4 mr-5 flex min-h-0 flex-1 flex-col rounded-[10px] border-2 border-[#ebebeb] bg-[#f6f6f6] pb-1 pl-1 pt-[26px]">
                                                <div className="relative min-h-0 flex-1 bg-[linear-gradient(to_bottom,#ffffff_0,#ffffff_2px,#fdf8f7_2px,#fdf8f7_32px,#ffffff_32px)] pl-[2px] pt-[1px]">
                                                    <table className="w-[1540px] table-fixed border-separate border-spacing-0 text-left">
                                                        <colgroup>
                                                            <col className="w-[39px]" />
                                                            <col className="w-[180px]" />
                                                            <col className="w-[840px]" />
                                                            <col className="w-[300px]" />
                                                            <col className="w-[181px]" />
                                                        </colgroup>
                                                        <thead>
                                                            <tr className="h-8">
                                                                {['P', 'Kode', 'Nama Perawatan', 'Kategori Perawatan', 'Tarif/Biaya'].map(head => (
                                                                    <th
                                                                        key={head}
                                                                        className="border-b-2 border-r-2 border-[#848484] p-0 pl-[6px] font-medium leading-[30px] shadow-[inset_-1px_-2px_0_#b5b2b2]"
                                                                    >
                                                                        {head}
                                                                    </th>
                                                                ))}
                                                            </tr>
                                                        </thead>
                                                        <tbody>
                                                            {daftarTindakan.map((row, index) => {
                                                                const checked = dipilih.includes(row.kode);
                                                                const stripe = index % 2 ? 'bg-[#fef5f4]' : 'bg-white';
                                                                const cell = 'border-b-2 border-r-2 border-[#e3e8de] py-0 px-[2px] whitespace-nowrap';
                                                                return (
                                                                    <tr key={row.kode} className={`h-11 ${checked ? 'text-[#ff0000]' : ''}`}>
                                                                        <td className={`border-b-2 border-r-2 border-[#e3e8de] bg-white p-0 pl-1 ${checked ? 'shadow-[inset_0_0_0_2px_#8aabf3]' : ''}`}>
                                                                            <Tick label={`Pilih ${row.kode}`} checked={checked} onChange={() => toggle(row.kode)} />
                                                                        </td>
                                                                        <td className={`${cell} ${stripe}`}>{row.kode}</td>
                                                                        <td className={`${cell} ${stripe}`}>{row.nama}</td>
                                                                        <td className={`${cell} ${stripe}`}>{row.kategori}</td>
                                                                        <td className={`${cell} bg-white text-right`}>{row.tarif}</td>
                                                                    </tr>
                                                                );
                                                            })}
                                                        </tbody>
                                                    </table>
                                                    {/* Gloss over the upper left of the table */}
                                                    <svg viewBox="0 0 2194 867" className="pointer-events-none absolute left-0 top-8 h-[867px] w-[2194px]">
                                                        <path
                                                            d="M0 0 H2194 C1850 55 1450 118 1212 203 C900 308 650 388 424 505 C300 578 120 703 0 838 Z"
                                                            fill="#fff"
                                                            opacity=".2"
                                                        />
                                                    </svg>
                                                </div>
                                            </div>
                                        </div>
                                    </div>
                                </div>
                            </section>
                        </div>

                        {/* Search */}
                        <section className="flex h-[88px] shrink-0 items-center border-y-2 border-l-2 border-[#edf3ea] pl-[26px]">
                            <label htmlFor="tgl1" className="w-[122px] shrink-0">Tgl.Rawat :</label>
                            <DateField id="tgl1" width="w-[189px]" />
                            <label htmlFor="tgl2" className="ml-4 w-[51px] shrink-0">s.d.</label>
                            <DateField id="tgl2" width="w-[189px]" />
                            <label htmlFor="carirm" className="ml-[45px] w-[86px] shrink-0">No.RM :</label>
                            <TextField id="carirm" value="000014" width="w-[280px]" />
                            <div className="ml-[10px]"><IconButton label="Pilih pasien"><ClipIcon /></IconButton></div>
                            <label htmlFor="keyword" className="ml-14 w-[116px] shrink-0">Key Word :</label>
                            <TextField id="keyword" value="pemeriksaan" width="w-[413px]" />
                            <div className="ml-[11px] flex gap-2">
                                <IconButton label="Cari"><CheckIcon /></IconButton>
                                <IconButton label="Tambah"><PlusIcon /></IconButton>
                            </div>
                        </section>

                        {/* Actions */}
                        <section className="flex h-[110px] shrink-0 items-start gap-[11px] border-y-2 border-l-2 border-[#edf3ea] pl-[10px] pt-[18px] leading-[60px]">
                            <ActionButton label="Simpan"><SaveIcon /></ActionButton>
                            <ActionButton label="Baru"><BanIcon /></ActionButton>
                            <ActionButton label="Hapus"><RecycleIcon /></ActionButton>
                            <ActionButton label="Ganti"><EditIcon /></ActionButton>
                            <ActionButton label="Cetak"><PrintIcon /></ActionButton>
                            <ActionButton label="Semua"><SearchIcon /></ActionButton>
                            <div className="flex w-[374px] shrink-0 gap-3 pl-[107px]">
                                <span>Record :</span>
                                <span>14</span>
                            </div>
                            <ActionButton label="Keluar"><CloseIcon /></ActionButton>
                        </section>
                    </fieldset>
                </main>
            </div>

            {/* Step notes */}
            <div className="pointer-events-none absolute inset-0 z-20">
                <div className="absolute left-[485px] top-[339px] h-[85px] w-[1558px] rounded border-[10px] border-[#1f62bd] shadow-[0_1px_1px_rgba(0,0,0,0.6)]" />
                <svg className="absolute inset-0 h-full w-full [filter:drop-shadow(0_2px_1px_rgba(0,0,0,0.35))]">
                    <defs>
                        <linearGradient id="arrowFill" x1="0" y1="0" x2="0" y2="1">
                            <stop offset="0" stopColor="#0c4fae" />
                            <stop offset=".5" stopColor="#1259bd" />
                            <stop offset="1" stopColor="#2c70d0" />
                        </linearGradient>
                    </defs>
                    <Arrow x1={1337} y1={158} x2={968} y2={291} />
                    <Arrow x1={1697} y1={1276} x2={1443} y2={1456} />
                    <Arrow x1={695} y1={1201} x2={531} y2={908} />
                    <Arrow x1={559} y1={1358} x2={221} y2={1539} />
                </svg>
                <Note place="left-[1350px] top-[136px]">1. Pilih Tab Penanfanan dokter</Note>
                <Note place="left-[2065px] top-[346px]">2. Pastikan Nama dokter yang<br />melakukan tindakan</Note>
                <Note place="left-[1710px] top-[1254px]">3. Cari nama tindakan yang dilakukan</Note>
                <Note place="left-[419px] top-[1212px]">4. Centang tindakan yang dilakukan</Note>
                <Note place="left-[572px] top-[1336px]">5. Klik simpan</Note>
            </div>
        </div>
    );
}
